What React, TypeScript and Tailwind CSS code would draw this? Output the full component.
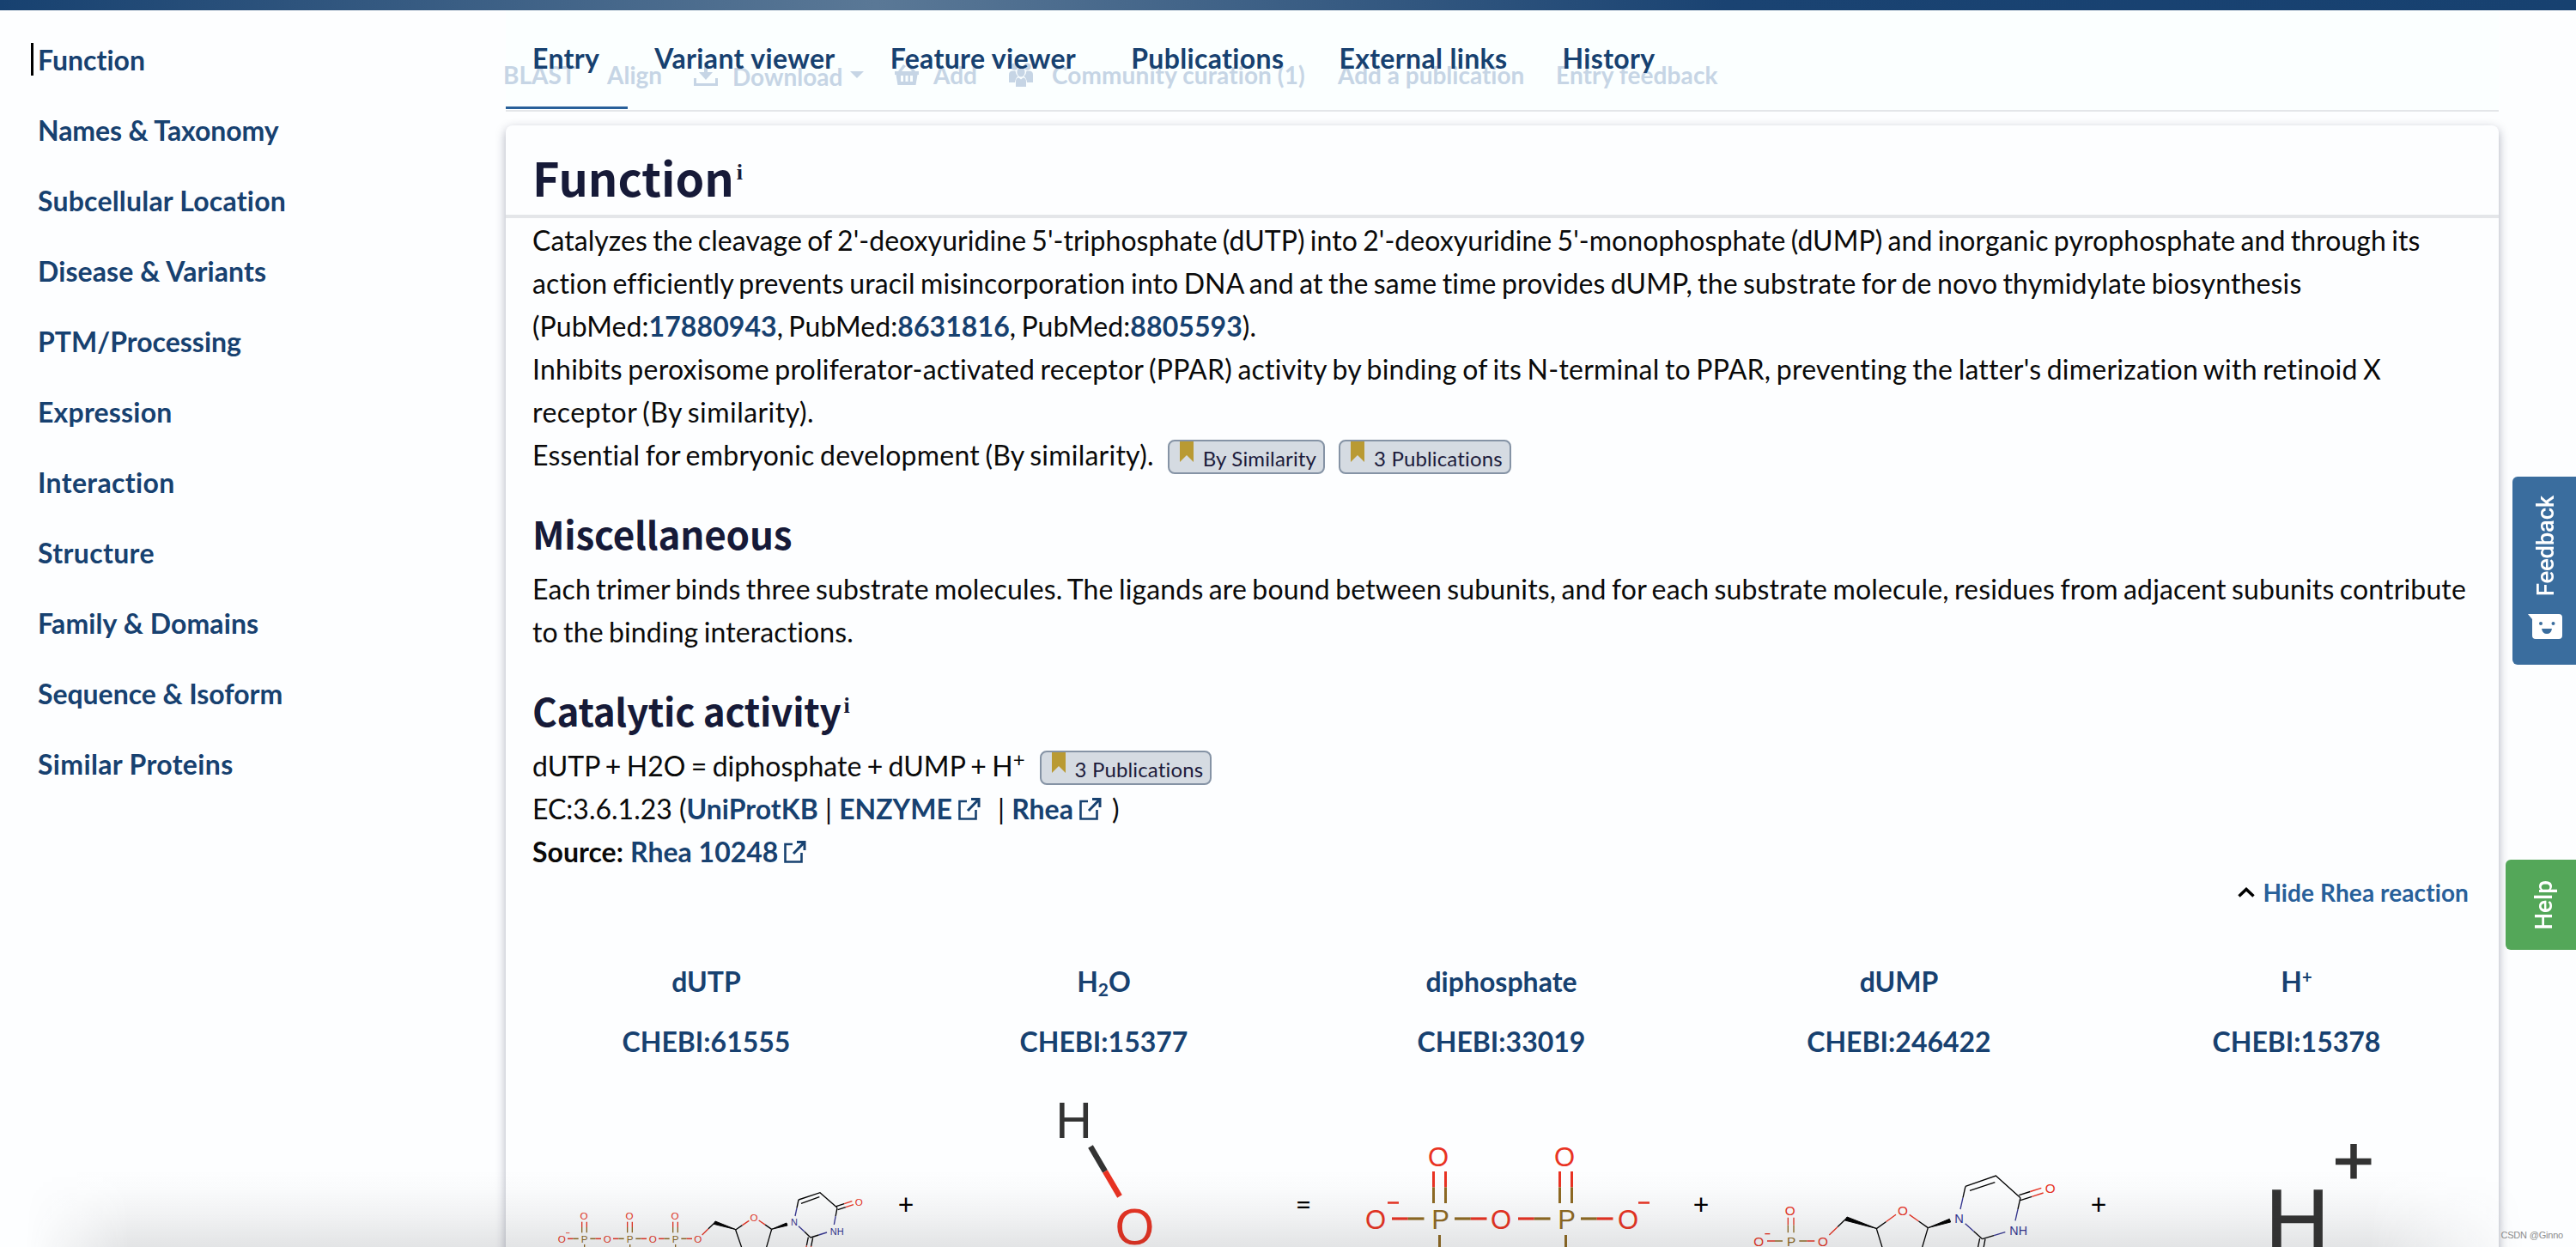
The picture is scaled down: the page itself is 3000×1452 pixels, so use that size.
import React from "react";

const SIDEBAR: { t: string; track: string }[] = [
  { t: "Function", track: "tracking-normal" },
  { t: "Names & Taxonomy", track: "tracking-[-0.1px]" },
  { t: "Subcellular Location", track: "tracking-[0.2px]" },
  { t: "Disease & Variants", track: "tracking-[0.1px]" },
  { t: "PTM/Processing", track: "tracking-normal" },
  { t: "Expression", track: "tracking-[0.2px]" },
  { t: "Interaction", track: "tracking-[0.35px]" },
  { t: "Structure", track: "tracking-[0.35px]" },
  { t: "Family & Domains", track: "tracking-[0.1px]" },
  { t: "Sequence & Isoform", track: "tracking-[-0.05px]" },
  { t: "Similar Proteins", track: "tracking-[0.35px]" },
];

const TABS = ["Entry", "Variant viewer", "Feature viewer", "Publications", "External links", "History"];

function A({ children }: { children: React.ReactNode }) {
  return <a className="font-bold text-[#174170]">{children}</a>;
}

function ExternalIcon() {
  return (
    <svg className="ml-[7px] inline-block h-[26px] w-[26px] align-[-1px]" viewBox="0 0 26 26" fill="none" stroke="#174170" strokeWidth="2.6">
      <path d="M10 4H1.500V24.500H20.500V14" />
      <path d="M15 1.500H24V11M23.500 2L11 15" strokeWidth="3" />
    </svg>
  );
}

function Evidence({ children, className = "" }: { children: string; className?: string }) {
  return (
    <span
      className={
        "inline-flex h-10 items-start rounded-lg border-2 border-[#8593a5] bg-[#d5dbe2] pl-3 pr-2 align-top text-[24px] leading-[39px] tracking-[0.15px] text-[#1c1b3c] " +
        className
      }
    >
      <svg className="mr-[11px] h-6 w-4 shrink-0" viewBox="0 0 16 24">
        <path d="M0 0H16V24L8 16L0 24Z" fill="#b99a33" />
      </svg>
      {children}
    </span>
  );
}

const RED = "#e93323";
const GOLD = "#8f6a23";
const NAVY = "#363693";

type AtomProps = { x: number; y: number; t: string; s: number; c: string };

function Atom({ x, y, t, s, c }: AtomProps) {
  return (
    <text x={x} y={y + s * 0.355} fontSize={s} fill={c} textAnchor="middle">
      {t}
    </text>
  );
}

/* Bond whose first half has colour a and second half colour b. */
function Bond({ p, a, b, w }: { p: [number, number, number, number]; a: string; b: string; w: number }) {
  const mx = (p[0] + p[2]) / 2;
  const my = (p[1] + p[3]) / 2;
  return (
    <g strokeWidth={w}>
      <line x1={p[0]} y1={p[1]} x2={mx} y2={my} stroke={a} />
      <line x1={mx} y1={my} x2={p[2]} y2={p[3]} stroke={b} />
    </g>
  );
}

function Molecule({ box, children }: { box: string; children: React.ReactNode }) {
  return (
    <svg className="h-[212px] w-[431px] shrink-0 font-['Liberation_Sans',sans-serif]" viewBox={box}>
      {children}
    </svg>
  );
}

function Sign({ children }: { children: string }) {
  return <div className="w-8 shrink-0 pt-[137px] text-center text-[32px] leading-[50px] text-black">{children}</div>;
}

function DUTP() {
  return (
    <Molecule box="608 1240 431 212">
      <g transform="translate(600 1240) scale(0.33333)">
        {[242, 401, 560].map((x, i) => (
          <g key={x}>
            <Atom x={x - 2} y={528} t="O" s={35} c={RED} />
            <Bond p={[x - 9, 548, x - 9, 586]} a={RED} b={GOLD} w={4} />
            <Bond p={[x + 8, 548, x + 8, 586]} a={RED} b={GOLD} w={4} />
            <Atom x={x} y={609} t="P" s={35} c={GOLD} />
            <Atom x={x - 79} y={609} t="O" s={35} c={RED} />
            <Bond p={[x - 59, 607, x - 21, 607]} a={RED} b={GOLD} w={4.5} />
            <Bond p={[x + 20, 607, x + 58, 607]} a={GOLD} b={RED} w={4.5} />
            <line x1={x} y1={627} x2={x} y2={636} stroke={GOLD} strokeWidth={4} />
            {i === 0 && <line x1={177} y1={587} x2={190} y2={587} stroke={RED} strokeWidth={2.5} />}
          </g>
        ))}
        <Atom x={638} y={609} t="O" s={35} c={RED} />
        <Bond p={[653, 594, 697, 551]} a={RED} b="#000" w={4} />
        <path d="M694 556L699 546L771 575Z" fill="#000" stroke="#000" strokeWidth="3" />
        <Bond p={[770, 576, 817, 544]} a="#000" b={RED} w={4} />
        <Atom x={834} y={533} t="O" s={35} c={RED} />
        <Bond p={[851, 543, 896, 574]} a={RED} b="#000" w={4} />
        <path d="M770 576L792 640M896 574L877 640" stroke="#000" strokeWidth="4" />
        <path d="M896 574L948 552L951 561Z" fill="#000" stroke="#000" strokeWidth="3" />
        <Atom x={975} y={550} t="N" s={33} c={NAVY} />
        <Bond p={[978, 528, 990, 471]} a={NAVY} b="#000" w={4} />
        <path d="M990 471L1065 446L1125 499M999 484L1063 461" stroke="#000" strokeWidth="4" fill="none" />
        <Bond p={[1122, 494, 1177, 476]} a="#000" b={RED} w={4} />
        <Bond p={[1127, 506, 1182, 488]} a="#000" b={RED} w={4} />
        <Atom x={1201} y={479} t="O" s={35} c={RED} />
        <Bond p={[1125, 499, 1114, 558]} a="#000" b={NAVY} w={4} />
        <Atom x={1124} y={583} t="NH" s={33} c={NAVY} />
        <Bond p={[1089, 585, 1032, 603]} a={NAVY} b="#000" w={4} />
        <Bond p={[1032, 603, 990, 563]} a="#000" b={NAVY} w={4} />
        <Bond p={[1024, 602, 1012, 660]} a="#000" b={RED} w={4} />
        <Bond p={[1040, 604, 1028, 662]} a="#000" b={RED} w={4} />
      </g>
    </Molecule>
  );
}

function Water() {
  return (
    <Molecule box="1071 1240 431 212">
      <Atom x={1250.5} y={1304.5} t="H" s={59} c="#333" />
      <Bond p={[1270, 1335, 1304, 1393]} a="#333" b={RED} w={6.5} />
      <Atom x={1321.5} y={1428} t="O" s={59} c={RED} />
    </Molecule>
  );
}

function Diphosphate() {
  return (
    <Molecule box="1534 1240 431 212">
      {[1676.5, 1823.5].map((x) => (
        <g key={x}>
          <Atom x={x - 1.5} y={1347} t="O" s={31} c={RED} />
          <Bond p={[x - 7, 1364, x - 7, 1401]} a={RED} b={GOLD} w={3} />
          <Bond p={[x + 7, 1364, x + 7, 1401]} a={RED} b={GOLD} w={3} />
          <Atom x={x + 1} y={1420} t="P" s={31} c={GOLD} />
          <Bond p={[x - 55.5, 1419, x - 18, 1419]} a={RED} b={GOLD} w={3.2} />
          <Bond p={[x + 17.5, 1419, x + 55, 1419]} a={GOLD} b={RED} w={3.2} />
          <line x1={x} y1={1438} x2={x} y2={1452} stroke={GOLD} strokeWidth={3} />
        </g>
      ))}
      {[1602, 1748, 1896].map((x) => (
        <Atom key={x} x={x} y={1420} t="O" s={31} c={RED} />
      ))}
      <path d="M1616 1400.500H1629M1908 1400.500H1921" stroke={RED} strokeWidth="2.4" />
    </Molecule>
  );
}

function DUMP() {
  return (
    <Molecule box="1997 1240 431 212">
      <g transform="translate(1950 1240) scale(0.33333)">
        <Atom x={404} y={508} t="O" s={46} c={RED} />
        <Bond p={[397, 533, 397, 586]} a={RED} b={GOLD} w={4} />
        <Bond p={[417, 533, 417, 586]} a={RED} b={GOLD} w={4} />
        <Atom x={408} y={616} t="P" s={46} c={GOLD} />
        <Atom x={295} y={616} t="O" s={46} c={RED} />
        <path d="M316 590H334" stroke={RED} strokeWidth="4" />
        <Bond p={[324, 615, 378, 615]} a={RED} b={GOLD} w={4.5} />
        <Bond p={[436, 615, 490, 615]} a={GOLD} b={RED} w={4.5} />
        <Atom x={519} y={616} t="O" s={46} c={RED} />
        <Bond p={[541, 594, 600, 537]} a={RED} b="#000" w={4} />
        <path d="M596 543L603 531L708 572Z" fill="#000" stroke="#000" strokeWidth="3" />
        <Bond p={[706, 572, 774, 523]} a="#000" b={RED} w={4} />
        <Atom x={798} y={508} t="O" s={46} c={RED} />
        <Bond p={[821, 523, 886, 569]} a={RED} b="#000" w={4} />
        <path d="M706 572L727 640M886 569L865 640" stroke="#000" strokeWidth="4" />
        <path d="M886 569L961 538L965 549Z" fill="#000" stroke="#000" strokeWidth="3" />
        <Atom x={995} y={535} t="N" s={44} c={NAVY} />
        <Bond p={[999, 504, 1017, 424]} a={NAVY} b="#000" w={4} />
        <path d="M1017 424L1123 387L1209 464M1032 439L1120 410" stroke="#000" strokeWidth="4" fill="none" />
        <Bond p={[1204, 455, 1282, 430]} a="#000" b={RED} w={4} />
        <Bond p={[1209, 473, 1289, 447]} a="#000" b={RED} w={4} />
        <Atom x={1313} y={432} t="O" s={46} c={RED} />
        <Bond p={[1209, 464, 1191, 544]} a="#000" b={NAVY} w={4} />
        <Atom x={1202} y={579} t="NH" s={43} c={NAVY} />
        <Bond p={[1156, 584, 1076, 608]} a={NAVY} b="#000" w={4} />
        <Bond p={[1076, 608, 1016, 554]} a="#000" b={NAVY} w={4} />
        <path d="M1067 606L1060 640M1086 608L1080 640" stroke="#000" strokeWidth="4" />
      </g>
    </Molecule>
  );
}

function Proton() {
  return (
    <Molecule box="2460 1240 431 212">
      <path d="M2720 1352.500H2761.500M2741 1332V1372.500" stroke="#333" strokeWidth="7.500" />
      <text x="2675.500" y="1457" fontSize="104" fill="#333" stroke="#333" strokeWidth="0.7" textAnchor="middle">
        H
      </text>
    </Molecule>
  );
}

const COMPOUNDS: { name: React.ReactNode; id: string }[] = [
  { name: "dUTP", id: "CHEBI:61555" },
  { name: <>H<span className="relative top-[5px] text-[21px]">2</span>O</>, id: "CHEBI:15377" },
  { name: "diphosphate", id: "CHEBI:33019" },
  { name: "dUMP", id: "CHEBI:246422" },
  { name: <>H<span className="relative -top-[10px] text-[20px]">+</span></>, id: "CHEBI:15378" },
];

function Info() {
  return <span className="font-['Liberation_Serif',serif] font-bold">i</span>;
}

export default function App() {
  return (
    <div className="relative flex h-[1452px] w-[3000px] flex-col overflow-hidden bg-[#fdfeff] font-['Lato',sans-serif] text-[32px] leading-[50px] text-[#0a0a0a] [font-variant-ligatures:none]">
      <div className="h-3 shrink-0 bg-[linear-gradient(90deg,#174170_0%,#5a7896_34%,#1a4372_67%,#174170_100%)]" />
      <div className="flex flex-1">
        <aside className="w-[589px] shrink-0 pl-9 pt-[36px]">
          {SIDEBAR.map(({ t, track }, i) => (
            <div key={t} className={"relative mb-[38px] flex h-11 items-center pl-2 font-bold text-[#174170] " + track}>
              {i === 0 && <span className="absolute top-0.5 left-0 h-[38px] w-[3px] bg-black" />}
              {t}
            </div>
          ))}
        </aside>

        <main className="w-[2321px] shrink-0">
          <div className="relative h-[118px] border-b-2 border-[#e4e6e9] bg-[#fbffff]">
            <div className="absolute -left-[3px] top-[50px] flex items-center whitespace-nowrap text-[28px] font-bold text-[#c6d5e5]">
              <span className="w-[121px]">BLAST</span>
              <span className="w-[101px]">Align</span>
              <svg className="mr-[17px] h-7 w-7" viewBox="0 0 28 28" fill="#c6d5e5">
                <path d="M12 0h4v11h6l-8 9-8-9h6zM0 18h3v6h22v-6h3v9H0z" />
              </svg>
              <span className="relative top-0.5 w-[137px]">Download</span>
              <svg className="mr-9 h-2.5 w-4" viewBox="0 0 16 10">
                <path d="M0 1h16L8 9z" fill="#c6d5e5" />
              </svg>
              <svg className="mr-[17px] h-7 w-7" viewBox="0 0 28 28" fill="#c6d5e5">
                <path fillRule="evenodd" d="M0 10h4L10 2l3 2-5 6h12l-5-6 3-2 6 8h4v4h-1.500L24.500 26h-21L1.500 14H0zM7 15v7h3v-7zM12.500 15v7h3v-7zM18 15v7h3v-7z" />
              </svg>
              <span className="w-[88px]">Add</span>
              <svg className="mr-[22px] h-7 w-7" viewBox="0 0 28 28" fill="#c6d5e5">
                <circle cx="6.500" cy="4.500" r="4" />
                <circle cx="21.500" cy="4.500" r="4" />
                <path d="M0 23V14q0-4.500 4.500-4.500H7.500q.5 4.500 3 6.500-3 2-3.500 7zM28 23V14q0-4.500-4.500-4.500H20.500q-.5 4.500-3 6.500 3 2 3.500 7z" />
                <ellipse cx="14" cy="11" rx="4.600" ry="5.500" />
                <path d="M8 28V22q0-4.500 3.500-4.500L14 19.500l2.500-2Q20 17.500 20 22v6z" />
              </svg>
              <span className="w-[333px] tracking-[0.1px]">Community curation (1)</span>
              <span className="w-[254px]">Add a publication</span>
              <span className="tracking-[0.1px]">Entry feedback</span>
            </div>
            <div className="relative flex h-[115px] font-bold tracking-[0.35px] text-[#174170]">
              {TABS.map((t, i) => (
                <div key={t} className={"border-b-3 pl-[31px] pr-[33px] pt-[31px] " + (i === 0 ? "border-[#28609a]" : "border-transparent")}>
                  {t}
                </div>
              ))}
            </div>
          </div>

          <article className="mt-4 h-[1400px] rounded-lg bg-[#fdfeff] shadow-[0_4px_12px_rgba(30,35,70,0.36)]">
            <h2 className="flex h-[108px] border-b-4 border-[#e4e6e9] pl-[31px] pt-[24px] font-['Noto_Sans_CJK_SC',sans-serif] text-[54px] font-bold leading-[72px] text-[#161a38]">
              Function
              <span className="relative -top-[8px] ml-[3px] text-[26px]"><Info /></span>
            </h2>
            <div className="whitespace-nowrap pl-[31px] pr-8 pt-px">
              <div className="[word-spacing:-2px]">
                <p className="tracking-[0.06px]">Catalyzes the cleavage of 2'-deoxyuridine 5'-triphosphate (dUTP) into 2'-deoxyuridine 5'-monophosphate (dUMP) and inorganic pyrophosphate and through its</p>
                <p className="tracking-[0.135px]">action efficiently prevents uracil misincorporation into DNA and at the same time provides dUMP, the substrate for de novo thymidylate biosynthesis</p>
                <p className="tracking-[0.08px]">(PubMed:<A>17880943</A>, PubMed:<A>8631816</A>, PubMed:<A>8805593</A>).</p>
                <p className="tracking-[0.235px]">Inhibits peroxisome proliferator-activated receptor (PPAR) activity by binding of its N-terminal to PPAR, preventing the latter's dimerization with retinoid X</p>
                <p className="tracking-[0.45px]">receptor (By similarity).</p>
              </div>
              <div className="h-[50px]">
                <span className="tracking-[0.24px] [word-spacing:-2px]">Essential for embryonic development (By similarity).</span>
                <Evidence className="mt-[7px] ml-4">By Similarity</Evidence>
                <Evidence className="mt-[7px] ml-4">3 Publications</Evidence>
              </div>
              <h3 className="mt-[30px] h-[76px] font-['Noto_Sans_CJK_SC',sans-serif] text-[44px] font-bold leading-[72px] tracking-[-0.2px] text-[#161a38]">Miscellaneous</h3>
              <div className="[word-spacing:-2px]">
                <p className="tracking-[0.15px]">Each trimer binds three substrate molecules. The ligands are bound between subunits, and for each substrate molecule, residues from adjacent subunits contribute</p>
                <p className="tracking-[0.12px]">to the binding interactions.</p>
              </div>
              <h3 className="mt-[30px] flex h-[76px] font-['Noto_Sans_CJK_SC',sans-serif] text-[44px] font-bold leading-[72px] tracking-[-0.3px] text-[#161a38]">
                Catalytic activity
                <span className="relative -top-[8px] ml-[3px] text-[26px]"><Info /></span>
              </h3>
              <div className="h-[50px]">
                <span className="tracking-[0.06px] [word-spacing:-2px]">dUTP + H2O = diphosphate + dUMP + H</span><span className="relative -top-[11px] text-[24px]">+</span>
                <Evidence className="mt-[7px] ml-[17px]">3 Publications</Evidence>
              </div>
              <div className="h-[50px]">
                EC:3.6.1.23 (<A>UniProtKB</A> | <A>ENZYME</A><ExternalIcon /><span className="ml-5">| </span><A>Rhea</A><ExternalIcon /><span className="ml-3">)</span>
              </div>
              <div className="h-[50px]">
                <b>Source:</b> <A>Rhea 10248</A><ExternalIcon />
              </div>
              <div className="flex h-[44px] items-center justify-end pr-[3px] text-[28px] font-bold tracking-[0.1px] text-[#28609a]">
                <svg className="mr-[9px] h-3 w-5" viewBox="0 0 20 12" fill="none" stroke="#000" strokeWidth="3.500">
                  <path d="M1.500 10.500L10 2.500L18.500 10.500" />
                </svg>
                Hide Rhea reaction
              </div>
            </div>
            <div className="ml-[2px] mt-[57px] grid grid-cols-[repeat(5,463px)] text-center font-bold text-[#174170]">
              {COMPOUNDS.map((c) => (
                <div key={c.id}>
                  <div className="h-[70px]">{c.name}</div>
                  <div className="h-[70px]">{c.id}</div>
                </div>
              ))}
            </div>
            <div className="-mt-[18px] ml-[19px] flex">
              <DUTP />
              <Sign>+</Sign>
              <Water />
              <Sign>=</Sign>
              <Diphosphate />
              <Sign>+</Sign>
              <DUMP />
              <Sign>+</Sign>
              <Proton />
            </div>
          </article>
        </main>
      </div>

      <div className="absolute right-0 top-[555px] h-[219px] w-[74px] rounded-l-md bg-[#3a6d9e]">
        <div className="flex h-[139px] w-full items-end justify-center pl-1 font-['Roboto',sans-serif] text-[27.5px] font-medium leading-[36px] tracking-[-0.2px] text-white">
          <span className="rotate-180 [writing-mode:vertical-rl]">Feedback</span>
        </div>
        <svg className="ml-[18px] mt-[21px] h-[29px] w-10" viewBox="0 0 40 29">
          <path d="M0 0H36Q40 0 40 4V25Q40 29 36 29H9Q5 29 5 25V6Z" fill="#fff" />
          <circle cx="15" cy="11" r="2" fill="#3a6d9e" />
          <circle cx="29.500" cy="11" r="2" fill="#3a6d9e" />
          <path d="M16 17H28Q27 23 22 23T16 17Z" fill="#3a6d9e" />
        </svg>
      </div>
      <div className="absolute right-0 top-[1001px] flex h-[105px] w-[82px] items-center justify-center rounded-l-md bg-[#54a759] pl-2 pt-px font-['Roboto',sans-serif] text-[28px] font-medium text-white">
        <span className="rotate-180 [writing-mode:vertical-rl]">Help</span>
      </div>

      <div className="pointer-events-none absolute bottom-0 left-0 h-[90px] w-full bg-[linear-gradient(0deg,rgba(40,42,46,0.12)_0%,rgba(40,42,46,0.055)_42%,rgba(40,42,46,0.015)_75%,transparent_100%)] [mask-image:linear-gradient(90deg,transparent_1%,black_5%,black_92%,transparent_98%)]" />
      <div className="absolute bottom-[6px] right-[15px] font-['Liberation_Sans',sans-serif] text-[11px] leading-[15px] tracking-[-0.2px] text-[#8c8c8c]">CSDN @Ginno</div>
    </div>
  );
}
